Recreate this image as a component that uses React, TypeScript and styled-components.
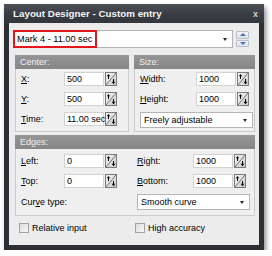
import React from "react";
import styled, { createGlobalStyle } from "styled-components";

const Global = createGlobalStyle`
  html, body { margin: 0; padding: 0; background: #ffffff; }
  body { font-family: "Liberation Sans", Arial, sans-serif; font-size: 9px; color: #000; }
`;

const Page = styled.div`
  padding: 4px 0 0 4px;
`;

const Window = styled.div`
  width: 260px;
  height: 246px;
  box-sizing: border-box;
  background: #2c2f34;
  padding: 0 5px 5px 5px;
  display: flex;
  flex-direction: column;
  box-shadow: 2px 3px 5px rgba(0, 0, 0, 0.45);
  border-radius: 2px 2px 0 0;
`;

const TitleBar = styled.div`
  height: 19px;
  flex: none;
  display: flex;
  align-items: center;
  justify-content: space-between;
  background: linear-gradient(#4c5057, #383b41 60%, #33363b);
  margin: 0 -5px;
  padding-left: 9px;
  padding-right: 6px;
`;

const Title = styled.span`
  color: #f4f4f4;
  font-weight: bold;
  font-size: 9.8px;
`;

const Close = styled.span`
  color: #d0d0d0;
  font-weight: bold;
  font-size: 9px;
`;

const Body = styled.div`
  flex: 1;
  background: #ececec;
  display: flex;
  flex-direction: column;
  padding: 7px 4px 0 6px;
`;

const TopRow = styled.div`
  display: flex;
  align-items: center;
  margin-left: -2px;
  gap: 3px;
  height: 18px;
`;

const Combo = styled.div<{ $w?: number }>`
  display: flex;
  align-items: center;
  box-sizing: border-box;
  height: ${(p) => (p.$w ? 16 : 18)}px;
  ${(p) => (p.$w ? `width: ${p.$w}px;` : "flex: none; width: 220px;")}
  background: #fff;
  border: 1px solid #b4b4b4;
  padding-right: 5px;
`;

const ComboText = styled.span`
  flex: 1;
  padding-left: 3px;
  white-space: nowrap;
`;

const Highlight = styled.span`
  display: flex;
  align-items: center;
  height: 18px;
  box-sizing: border-box;
  margin: -1px 0 -1px -1px;
  border: 2px solid #e3161c;
  padding: 0 3px 0 2px;
  white-space: nowrap;
  font-size: 9.2px;
`;

const Spacer = styled.span`
  flex: 1;
`;

const Arrow = styled.span`
  width: 0;
  height: 0;
  border-left: 2.5px solid transparent;
  border-right: 2.5px solid transparent;
  border-top: 3px solid #222;
`;

const SpinPair = styled.div`
  display: flex;
  flex-direction: column;
  gap: 1px;
  width: 13px;
  height: 16px;
`;

const SpinHalf = styled.div`
  flex: 1;
  display: flex;
  align-items: center;
  justify-content: center;
  background: linear-gradient(#f2f4f8, #dde2ea);
  border: 1px solid #b9bfc9;
  border-radius: 1px;
`;

const Tri = styled.span<{ $up?: boolean }>`
  width: 0;
  height: 0;
  border-left: 3px solid transparent;
  border-right: 3px solid transparent;
  ${(p) => (p.$up ? "border-bottom: 3px solid #4a6fc0;" : "border-top: 3px solid #4a6fc0;")}
`;

const Groups = styled.div<{ $mt: number }>`
  display: flex;
  gap: 5px;
  margin-top: ${(p) => p.$mt}px;
`;

const Group = styled.div<{ $w?: number }>`
  ${(p) => (p.$w ? `width: ${p.$w}px; flex: none;` : "flex: 1;")}
  border: 1px solid #cbcbcb;
  border-top: none;
  background: #efefef;
  display: flex;
  flex-direction: column;
`;

const GroupHeader = styled.div`
  height: 14px;
  background: linear-gradient(#959595, #868686);
  color: #f0f0f0;
  padding-left: 5px;
  display: flex;
  align-items: center;
  margin: 0 -1px;
`;

const GroupBody = styled.div`
  display: flex;
  flex-direction: column;
  gap: 6px;
  padding: 3px 0 3px 5px;
`;

const Row = styled.div<{ $label: number }>`
  display: grid;
  grid-template-columns: ${(p) => p.$label}px 40px 12px;
  column-gap: 1px;
  align-items: center;
  height: 14px;
`;

const Label = styled.span`
  white-space: nowrap;
`;

const Input = styled.div`
  box-sizing: border-box;
  height: 14px;
  background: #fff;
  border: 1px solid #d2d2d2;
  padding-left: 2px;
  display: flex;
  align-items: center;
  white-space: nowrap;
`;

const SpinBtn = styled.span`
  display: block;
  width: 12px;
  height: 14px;
  position: relative;
`;

const EdgesGrid = styled.div`
  display: grid;
  grid-template-columns: 111px 1fr;
  column-gap: 5px;
  row-gap: 6px;
  padding: 5px 0 5px 5px;
`;

const Cell = styled.div`
  display: flex;
  align-items: center;
`;

const CheckRow = styled.div`
  display: grid;
  grid-template-columns: 116px 1fr;
  padding: 7px 0 0 4px;
`;

const Check = styled.label`
  display: flex;
  align-items: center;
  gap: 3px;
`;

const Box = styled.span`
  width: 8px;
  height: 8px;
  border: 1px solid #a2a2a2;
  background: linear-gradient(135deg, #dcdcdc, #f8f8f8);
`;

const U = styled.span`
  text-decoration: underline;
`;

const SpinIcon = () => (
  <SpinBtn>
    <svg width="12" height="14" viewBox="0 0 12 14">
      <defs>
        <linearGradient id="sg" x1="0" y1="0" x2="1" y2="1">
          <stop offset="0" stopColor="#f6f6f6" />
          <stop offset="1" stopColor="#c9c9c9" />
        </linearGradient>
      </defs>
      <rect x="0.5" y="0.5" width="11" height="13" fill="url(#sg)" stroke="#7c7c7c" />
      <line x1="1" y1="13" x2="11" y2="1" stroke="#555" strokeWidth="0.8" />
      <path d="M3.5 2 L1.8 4.3 H3 V7 H4 V4.3 H5.2 Z" fill="#000" />
      <path d="M8.5 12.3 L6.6 9.8 H8 V7 H9 V9.8 H10.4 Z" fill="#000" />
    </svg>
  </SpinBtn>
);

type FieldProps = { label: React.ReactNode; value: string; lw: number };
const Field = ({ label, value, lw }: FieldProps) => (
  <Row $label={lw}>
    <Label>{label}</Label>
    <Input>{value}</Input>
    <SpinIcon />
  </Row>
);

export default function App() {
  return (
    <>
      <Global />
      <Page>
        <Window>
          <TitleBar>
            <Title>Layout Designer - Custom entry</Title>
            <Close>x</Close>
          </TitleBar>
          <Body>
            <TopRow>
              <Combo>
                <Highlight>Mark 4 - 11.00 sec</Highlight>
                <Spacer />
                <Arrow />
              </Combo>
              <SpinPair>
                <SpinHalf>
                  <Tri $up />
                </SpinHalf>
                <SpinHalf>
                  <Tri />
                </SpinHalf>
              </SpinPair>
            </TopRow>
            <Groups $mt={7}>
              <Group $w={112}>
                <GroupHeader>Center:</GroupHeader>
                <GroupBody>
                  <Field lw={42} label={<><U>X</U>:</>} value="500" />
                  <Field lw={42} label={<><U>Y</U>:</>} value="500" />
                  <Field lw={42} label={<><U>T</U>ime:</>} value="11.00 sec" />
                </GroupBody>
              </Group>
              <Group>
                <GroupHeader>Size:</GroupHeader>
                <GroupBody>
                  <Field lw={55} label={<><U>W</U>idth:</>} value="1000" />
                  <Field lw={55} label={<><U>H</U>eight:</>} value="1000" />
                  <Combo $w={113}>
                    <ComboText>Freely adjustable</ComboText>
                    <Arrow />
                  </Combo>
                </GroupBody>
              </Group>
            </Groups>
            <Groups $mt={3}>
              <Group>
                <GroupHeader>Edges:</GroupHeader>
                <EdgesGrid>
                  <Field lw={42} label={<><U>L</U>eft:</>} value="0" />
                  <Field lw={55} label={<><U>R</U>ight:</>} value="1000" />
                  <Field lw={42} label={<><U>T</U>op:</>} value="0" />
                  <Field lw={55} label={<><U>B</U>ottom:</>} value="1000" />
                  <Cell>
                    <Label>
                      Cur<U>v</U>e type:
                    </Label>
                  </Cell>
                  <Cell>
                    <Combo $w={113}>
                      <ComboText>Smooth curve</ComboText>
                      <Arrow />
                    </Combo>
                  </Cell>
                </EdgesGrid>
              </Group>
            </Groups>
            <CheckRow>
              <Check>
                <Box />
                Relative input
              </Check>
              <Check>
                <Box />
                High accuracy
              </Check>
            </CheckRow>
          </Body>
        </Window>
      </Page>
    </>
  );
}
